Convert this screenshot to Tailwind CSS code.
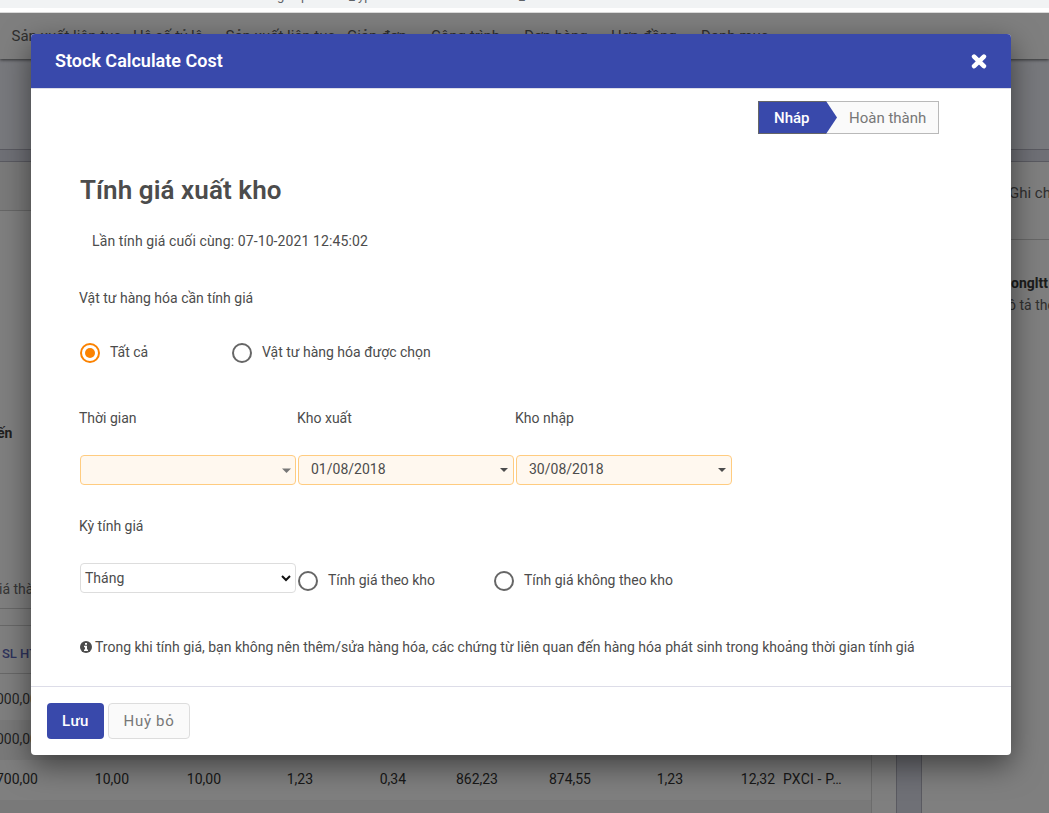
<!DOCTYPE html>
<html lang="vi">
<head>
<meta charset="utf-8">
<title>Stock Calculate Cost</title>
<script src="https://cdn.jsdelivr.net/npm/@tailwindcss/browser@4"></script>
</head>
<body class="relative h-[813px] w-[1049px] overflow-hidden bg-white font-['Roboto',sans-serif] text-sm leading-5 text-[#4c4c4c]">
<!-- Browser toolbar edge -->
<div class="relative h-2 overflow-hidden bg-[#f1f3f4]">
  <span class="absolute -top-[12px] left-[277px] text-[13px] leading-4 text-[#5f6368]">g</span>
  <span class="absolute -top-[12px] left-[301px] text-[13px] leading-4 text-[#5f6368]">p</span>
  <span class="absolute -top-[12px] left-[349px] text-[13px] leading-4 text-[#5f6368]">_</span>
  <span class="absolute -top-[12px] left-[358px] text-[13px] leading-4 text-[#5f6368]">yp</span>
  <span class="absolute -top-[12px] left-[519px] text-[13px] leading-4 text-[#5f6368]">_</span>
</div>
<div class="h-[5px] border-b border-[#dadada] bg-white"></div>

<!-- Page under the dialog -->
<div class="relative h-[800px] overflow-hidden bg-white">
  <nav class="relative z-10 flex h-[46px] items-center whitespace-nowrap bg-white pl-[11.5px] shadow-[0_1px_3px_rgba(0,0,0,0.6)]">
    <span class="w-[214px] text-[15px] text-[#5e5e5e]">Sản xuất liên tục - Hệ số tỷ lệ</span>
    <span class="w-[205.5px] text-[15px] text-[#5e5e5e]">Sản xuất liên tục - Giản đơn</span>
    <span class="w-[93px] text-[15px] text-[#5e5e5e]">Công trình</span>
    <span class="w-[87px] text-[15px] text-[#5e5e5e]">Đơn hàng</span>
    <span class="w-[90px] text-[15px] text-[#5e5e5e]">Hợp đồng</span>
    <span class="text-[15px] text-[#5e5e5e]">Danh mục</span>
  </nav>
  <div class="h-[91px] border-b border-[#b4b5c2] bg-[#f0f2fb]"></div>
  <div class="h-3 border-b border-[#b4b5c2] bg-[#dfe0ec]"></div>
  <div class="flex h-[651px]">
    <section class="w-[896px]">
      <div class="h-[49px] border-b border-[#cfcfcf] bg-[#f4f4f4]"></div>
      <div class="h-[212px]"></div>
      <div class="-ml-[3px] h-5 font-bold text-[#404040]">ến</div>
      <div class="h-[136px]"></div>
      <div class="flex h-[30px] border-b border-[#d0d0d0] text-[#6a6a6a]"><span class="-ml-px">iá thành</span></div>
      <div class="w-[872px] border-r border-[#d8d8d8]">
        <div class="h-[17px] border-b border-[#d0d0d0]"></div>
        <div class="flex h-12 items-center border-b border-[#d0d0d0] pt-2 pl-[2px] text-[13px] font-medium text-[#5c66b8]">SL HT</div>
        <div class="h-[6px]"></div>
        <div class="flex h-10 items-center pb-0.5 text-black/75"><span class="flex w-[38px] justify-end">000,00</span></div>
        <div class="flex h-10 items-center bg-[#f2f2f2] pb-0.5 text-black/75"><span class="flex w-[38px] justify-end">000,00</span></div>
        <div class="flex h-10 items-center pb-0.5 whitespace-nowrap text-[#333]">
          <span class="flex w-[38px] justify-end">700,00</span>
          <span class="w-[91px] text-right">10,00</span>
          <span class="w-[92px] text-right">10,00</span>
          <span class="w-[92px] text-right">1,23</span>
          <span class="w-[93px] text-right">0,34</span>
          <span class="w-[92px] text-right">862,23</span>
          <span class="w-[93px] text-right">874,55</span>
          <span class="w-[92px] text-right">1,23</span>
          <span class="w-[92px] text-right">12,32</span>
          <span class="pl-2 tracking-[0.2px]">PXCI - P…</span>
        </div>
        <div class="h-[50px] bg-[#f2f2f2]"></div>
      </div>
    </section>
    <div class="w-[26px] border-x border-[#b4b5c2] bg-[#dfe0ec]"></div>
    <aside class="flex-1 overflow-hidden whitespace-nowrap">
      <div class="flex h-[78px] border-b border-[#cfcfcf] pt-[21px] pl-[87px] text-[15px] text-[#606060]">Ghi chú</div>
      <div class="pt-[33px] pl-[89px] font-bold text-[#383838]">ongltt</div>
      <div class="flex pt-[2px] pl-[86px] text-[#606060]">ô tả theo</div>
    </aside>
  </div>
  <div class="absolute inset-0 z-20 bg-black/50"></div>
</div>

<!-- Dialog -->
<div class="absolute top-[34px] left-[31px] z-30 flex h-[721px] w-[980px] flex-col overflow-hidden rounded-[4px] bg-white shadow-[0_10px_30px_rgba(0,0,0,0.5)]">
  <header class="flex h-[55px] items-center justify-between border-b border-[#dddde8] bg-[#3949ab] pr-6 pl-6 text-white">
    <h4 class="text-[18px] leading-6 font-semibold">Stock Calculate Cost</h4>
    <svg class="size-4" viewBox="0 0 16 16" fill="none" stroke="#fff" stroke-width="4.6" stroke-linecap="round"><path d="M3.1 3.6 12.9 13.100M12.9 3.600 3.1 13.100"/></svg>
  </header>
  <main class="flex-1 overflow-hidden">
    <div class="flex justify-end pt-3 pr-[72px]">
      <div class="relative flex h-[33px] w-[181px] border border-[#b9b9b9] bg-[#fafafa] text-[15px]">
        <svg class="absolute -top-px -left-px" width="80" height="33" viewBox="0 0 80 33"><path d="M0 0H68L79 16.5 68 33H0Z" fill="#3949ab"/><path d="M68 .5H.5V32.500H68" fill="none" stroke="#666"/></svg>
        <span class="relative w-[79px] pl-[15px] leading-[33px] font-medium text-white">Nháp</span>
        <span class="pl-[11px] leading-[33px] text-[#777]">Hoàn thành</span>
      </div>
    </div>
    <h1 class="pt-[38px] pl-[49px] text-[26px] leading-9 font-semibold tracking-[0.08px]">Tính giá xuất kho</h1>
    <p class="pt-[23px] pl-[61px] tracking-[0.11px]">Lần tính giá cuối cùng: 07-10-2021 12:45:02</p>
    <p class="pt-[37px] pl-12">Vật tư hàng hóa cần tính giá</p>
    <div class="flex items-center pt-[34px] pl-[49px]">
      <label class="flex w-[152px] items-center"><svg class="mt-px size-5" viewBox="0 0 20 20"><circle cx="10" cy="10" r="9" fill="none" stroke="#fb8200" stroke-width="2"/><circle cx="10" cy="10" r="5" fill="#fb8200"/></svg><span class="pb-px pl-[10px]">Tất cả</span></label>
      <label class="flex items-center"><svg class="mt-px size-5" viewBox="0 0 20 20"><circle cx="10" cy="10" r="9" fill="none" stroke="#666" stroke-width="2"/></svg><span class="pb-px pl-[10px]">Vật tư hàng hóa được chọn</span></label>
    </div>
    <div class="flex pt-[45px] pl-12"><span class="w-[218px]">Thời gian</span><span class="w-[218px]">Kho xuất</span><span>Kho nhập</span></div>
    <div class="flex gap-[2px] pt-[27px] pl-[49px]">
      <div class="flex h-[30px] w-[216px] items-center justify-end rounded-[4px] border border-[#ffcc80] bg-[#fff8ef] pr-1"><svg width="9" height="5" viewBox="0 0 9 5"><path d="M0 .5H9L4.500 5Z" fill="#777"/></svg></div>
      <div class="flex h-[30px] w-[216px] items-center justify-between rounded-[4px] border border-[#ffcc80] bg-[#fff8ef] pr-[5px] pl-3"><span class="pb-0.5">01/08/2018</span><svg width="8" height="4" viewBox="0 0 8 4"><path d="M0 0H8L4 4Z" fill="#4c4c4c"/></svg></div>
      <div class="flex h-[30px] w-[216px] items-center justify-between rounded-[4px] border border-[#ffcc80] bg-[#fff8ef] pr-[5px] pl-3"><span class="pb-0.5">30/08/2018</span><svg width="8" height="4" viewBox="0 0 8 4"><path d="M0 0H8L4 4Z" fill="#4c4c4c"/></svg></div>
    </div>
    <p class="pt-[31px] pl-12">Kỳ tính giá</p>
    <div class="flex gap-[2px] pt-[27px] pl-[49px]">
      <div class="flex h-[30px] w-[216px] items-center justify-between rounded-[4px] border border-[#dddddd] bg-white pr-1 pl-1"><span>Tháng</span><svg width="10" height="7" viewBox="0 0 10 7" fill="none" stroke="#111" stroke-width="2"><path d="M1 1 5 5 9 1"/></svg></div>
      <label class="flex w-[194px] items-center pt-1"><svg class="mt-px size-5" viewBox="0 0 20 20"><circle cx="10" cy="10" r="9" fill="none" stroke="#666" stroke-width="2"/></svg><span class="pl-[10px]">Tính giá theo kho</span></label>
      <label class="flex items-center pt-1"><svg class="mt-px size-5" viewBox="0 0 20 20"><circle cx="10" cy="10" r="9" fill="none" stroke="#666" stroke-width="2"/></svg><span class="pl-[10px]">Tính giá không theo kho</span></label>
    </div>
    <p class="flex items-center pt-[44px] pl-[49px] whitespace-nowrap">
      <svg class="mr-[3px] size-3" viewBox="0 0 12 12"><circle cx="6" cy="6" r="6" fill="#4c4c4c"/><path d="M5 2H7V3.700H5ZM4 4.700H7V8.500H8V10H4V8.500H5V6.200H4Z" fill="#fff"/></svg>
      <span>Trong khi tính giá, bạn không nên thêm/sửa hàng hóa, các chứng từ liên quan đến hàng hóa phát sinh trong khoảng thời gian tính giá</span>
    </p>
  </main>
  <footer class="flex h-[69px] gap-1 border-t border-[#dddde8] pt-4 pl-4">
    <button class="h-9 w-[57px] rounded-[4px] bg-[#3949ab] text-[15px] font-medium tracking-[0.5px] text-white">Lưu</button>
    <button class="h-9 w-[82px] rounded-[4px] border border-[#dddddd] bg-[#fafafa] text-[15px] tracking-[0.7px] text-[#777]">Huỷ bỏ</button>
  </footer>
</div>
</body>
</html>
